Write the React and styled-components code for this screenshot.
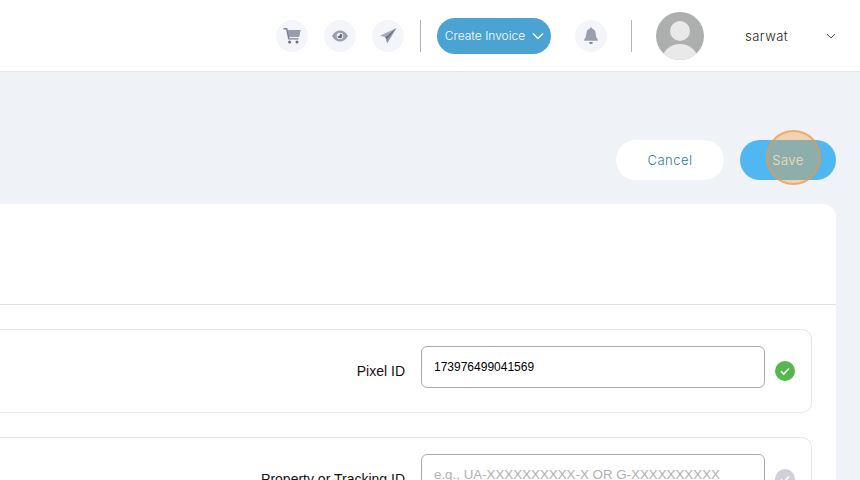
import React from "react";
import styled, { createGlobalStyle } from "styled-components";

const GlobalStyle = createGlobalStyle`
  html, body {
    margin: 0;
    height: 480px;
    overflow: hidden;
    background: #eff3f8;
    font-family: "Inter", "Liberation Sans", sans-serif;
  }
  * { box-sizing: border-box; }
`;

const CheckMark = () => (
  <svg width="12" height="12" viewBox="0 0 12 12" fill="none" stroke="#fff" strokeWidth="1.6">
    <path d="M2 6.2 4.8 9 10 3.5" />
  </svg>
);

const App = () => (
  <Page>
    <GlobalStyle />
    <Header>
      <IconCircle>
        <svg width="18" height="18" viewBox="0 0 18 18">
          <path d="M0.500 1h3.700l.5 2H17.500l-1.500 7H6.200l.3 1.200h9v1.400H5.200L3.100 2.400H.5z" fill="#7f8293" />
          <path d="M4.700 3H17.500l-1.500 7H6.200z" fill="#9a9dac" />
          <circle cx="6.600" cy="15" r="1.500" fill="#6c6f80" />
          <circle cx="14" cy="15" r="1.500" fill="#6c6f80" />
        </svg>
      </IconCircle>
      <IconCircle>
        <svg width="18" height="18" viewBox="0 0 18 18">
          <path d="M1 9c2-3.600 4.700-5.500 8-5.500s6 1.900 8 5.500c-2 3.600-4.700 5.500-8 5.500S3 12.600 1 9z" fill="#9c9eac" />
          <circle cx="9" cy="9" r="3.300" fill="#eef0f5" />
          <path d="M9 6.700A2.300 2.300 0 1 1 6.700 9 1.900 1.900 0 0 0 9 6.700z" fill="#666979" />
        </svg>
      </IconCircle>
      <IconCircle>
        <svg width="20" height="20" viewBox="0 0 20 20">
          <path d="M18.500 2 2 9.700l5.400 1.500z" fill="#a5a8b5" />
          <path d="M18.500 2 7.400 11.200l1.700 6.300z" fill="#9598a7" />
          <path d="M18.500 2 7.400 11.200l1.700 2z" fill="#6c6f80" />
        </svg>
      </IconCircle>
      <Divider />
      <CreateButton>
        Create Invoice
        <svg width="14" height="14" viewBox="0 0 14 14" fill="none" stroke="#fff" strokeWidth="1.4">
          <path d="M2 4.500 7 9.500l5-5" />
        </svg>
      </CreateButton>
      <IconCircle $first>
        <svg width="20" height="20" viewBox="0 0 20 20">
          <path d="M10 1.500c.8 0 1.200.5 1.300 1.200 2.400.6 3.200 2.600 3.400 5 .2 3 1 4.600 2.100 5.700v1.400H3.200v-1.400c1.100-1.100 1.900-2.700 2.100-5.700.2-2.400 1-4.400 3.400-5 .1-.7.500-1.200 1.300-1.200z" fill="#9b9eae" />
          <path d="M8.200 16.300h3.600a1.800 1.500 0 0 1-3.600 0z" fill="#55596a" />
        </svg>
      </IconCircle>
      <Divider $wide />
      <Avatar>
        <svg width="48" height="48" viewBox="0 0 48 48">
          <circle cx="24" cy="19" r="10" fill="#e9e9e9" />
          <ellipse cx="24" cy="48" rx="18" ry="16" fill="#e9e9e9" />
        </svg>
      </Avatar>
      <UserName>sarwat</UserName>
      <svg width="10" height="10" viewBox="0 0 10 10" fill="none" stroke="#555" strokeWidth="1">
        <path d="M1 3l4 4 4-4" />
      </svg>
    </Header>
    <Main>
      <Actions>
        <CancelButton>Cancel</CancelButton>
        <SaveButton>
          Save
          <ClickMarker />
        </SaveButton>
      </Actions>
      <Card>
        <CardTop />
        <CardBody>
          <Row>
            <RowLabel>Pixel ID</RowLabel>
            <Field value="173976499041569" readOnly />
            <Check $active>
              <CheckMark />
            </Check>
          </Row>
          <Row>
            <RowLabel>Property or Tracking ID</RowLabel>
            <Field placeholder="e.g., UA-XXXXXXXXXX-X OR G-XXXXXXXXXX" readOnly />
            <Check>
              <CheckMark />
            </Check>
          </Row>
        </CardBody>
      </Card>
    </Main>
  </Page>
);

const Page = styled.div`
  width: 860px;
  height: 480px;
  overflow: hidden;
`;

const Header = styled.header`
  height: 72px;
  background: #fff;
  border-bottom: 1px solid #e3e7ec;
  display: flex;
  align-items: center;
  justify-content: flex-end;
  padding-right: 24px;
`;

const IconCircle = styled.div`
  width: 32px;
  height: 32px;
  border-radius: 50%;
  background: #f3f5fa;
  display: flex;
  align-items: center;
  justify-content: center;
  margin-left: ${props => (props.$first ? "24px" : "16px")};
`;

const Divider = styled.div`
  width: 1px;
  height: 32px;
  background: #b4b4b4;
  margin-left: ${props => (props.$wide ? "24px" : "16px")};
  margin-right: ${props => (props.$wide ? "24px" : "16px")};
`;

const CreateButton = styled.div`
  width: 114px;
  height: 36px;
  padding-left: 2px;
  border-radius: 18px;
  background: #4aa3d3;
  color: #fff;
  font-size: 12px;
  font-weight: 300;
  display: flex;
  align-items: center;
  justify-content: center;
  gap: 6px;
`;

const Avatar = styled.div`
  width: 48px;
  height: 48px;
  border-radius: 50%;
  background: #adafaf;
  overflow: hidden;
  svg { display: block; }
`;

const UserName = styled.div`
  font-size: 13px;
  font-weight: 300;
  color: #222;
  letter-spacing: 0.5px;
  margin-left: 41px;
  width: 81px;
`;

const Main = styled.main`
  padding: 68px 24px 0 0;
`;

const Actions = styled.div`
  display: flex;
  justify-content: flex-end;
  gap: 16px;
  height: 40px;
`;

const CancelButton = styled.div`
  width: 108px;
  height: 40px;
  border-radius: 20px;
  background: #fff;
  color: #1c8296;
  font-size: 13px;
  font-weight: 300;
  letter-spacing: 0.5px;
  display: flex;
  align-items: center;
  justify-content: center;
`;

const SaveButton = styled.div`
  position: relative;
  width: 96px;
  height: 40px;
  border-radius: 20px;
  background: #50b7f0;
  color: #fff;
  font-size: 13px;
  font-weight: 300;
  letter-spacing: 0.5px;
  display: flex;
  align-items: center;
  justify-content: center;
`;

const ClickMarker = styled.div`
  position: absolute;
  left: 26px;
  top: -10px;
  width: 55px;
  height: 55px;
  border-radius: 50%;
  background: rgba(245, 160, 60, 0.38);
  border: 2px solid rgba(235, 150, 70, 0.65);
`;

const Card = styled.section`
  margin-top: 24px;
  background: #fff;
  border-radius: 0 14px 0 0;
  height: 300px;
`;

const CardTop = styled.div`
  height: 101px;
  border-bottom: 1px solid #dfdfdf;
`;

const CardBody = styled.div`
  padding: 24px 24px 0 0;
  display: flex;
  flex-direction: column;
  gap: 24px;
`;

const Row = styled.div`
  height: 84px;
  border: 1px solid #e6e6e6;
  border-left: none;
  border-radius: 0 10px 10px 0;
  display: flex;
  align-items: center;
  justify-content: flex-end;
  padding-right: 16px;
`;

const RowLabel = styled.label`
  font-family: "Liberation Sans", sans-serif;
  font-size: 14px;
  color: #111;
  margin-right: 16px;
`;

const Field = styled.input`
  width: 344px;
  height: 42px;
  margin-bottom: 8px;
  border: 1px solid #aaa;
  border-radius: 6px;
  padding: 0 12px;
  font-family: "Liberation Sans", sans-serif;
  font-size: 12px;
  color: #000;
  outline: none;
  &::placeholder {
    color: #b0b0b0;
    font-size: 13.33px;
  }
`;

const Check = styled.div`
  width: 20px;
  height: 20px;
  border-radius: 50%;
  margin-left: 10px;
  background: ${props => (props.$active ? "#55b84f" : "#cfd0d8")};
  display: flex;
  align-items: center;
  justify-content: center;
`;

export default App;
